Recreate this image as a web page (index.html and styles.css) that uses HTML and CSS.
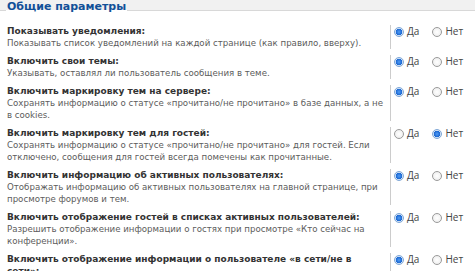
FILE: index.html
```html
<!DOCTYPE html>
<html lang="ru">
<head>
  <meta charset="UTF-8" />
  <meta name="viewport" content="width=device-width, initial-scale=1.0"/>
  <title>Общие параметры</title>
  <link rel="stylesheet" href="styles.css">
</head>
<body>

  <fieldset class="settings">
    <legend>Общие параметры</legend>

    <dl class="row">
      <dt>
        <label class="name">Показывать уведомления:</label>
        <span class="explain">Показывать список уведомлений на каждой странице (как правило, вверху).</span>
      </dt>
      <dd>
        <label class="opt"><input type="radio" name="notify" checked /> Да</label>
        <label class="opt"><input type="radio" name="notify" /> Нет</label>
      </dd>
    </dl>

    <dl class="row">
      <dt>
        <label class="name">Включить свои темы:</label>
        <span class="explain">Указывать, оставлял ли пользователь сообщения в теме.</span>
      </dt>
      <dd>
        <label class="opt"><input type="radio" name="dotted" checked /> Да</label>
        <label class="opt"><input type="radio" name="dotted" /> Нет</label>
      </dd>
    </dl>

    <dl class="row">
      <dt>
        <label class="name">Включить маркировку тем на сервере:</label>
        <span class="explain">Сохранять информацию о статусе «прочитано/не прочитано» в базе данных, а не в cookies.</span>
      </dt>
      <dd>
        <label class="opt"><input type="radio" name="db_track" checked /> Да</label>
        <label class="opt"><input type="radio" name="db_track" /> Нет</label>
      </dd>
    </dl>

    <dl class="row">
      <dt>
        <label class="name">Включить маркировку тем для гостей:</label>
        <span class="explain">Сохранять информацию о статусе «прочитано/не прочитано» для гостей. Если отключено, сообщения для гостей всегда помечены как прочитанные.</span>
      </dt>
      <dd>
        <label class="opt"><input type="radio" name="guest_track" /> Да</label>
        <label class="opt"><input type="radio" name="guest_track" checked /> Нет</label>
      </dd>
    </dl>

    <dl class="row">
      <dt>
        <label class="name">Включить информацию об активных пользователях:</label>
        <span class="explain">Отображать информацию об активных пользователях на главной странице, при просмотре форумов и тем.</span>
      </dt>
      <dd>
        <label class="opt"><input type="radio" name="online" checked /> Да</label>
        <label class="opt"><input type="radio" name="online" /> Нет</label>
      </dd>
    </dl>

    <dl class="row">
      <dt>
        <label class="name">Включить отображение гостей в списках активных пользователей:</label>
        <span class="explain">Разрешить отображение информации о гостях при просмотре «Кто сейчас на конференции».</span>
      </dt>
      <dd>
        <label class="opt"><input type="radio" name="online_guests" checked /> Да</label>
        <label class="opt"><input type="radio" name="online_guests" /> Нет</label>
      </dd>
    </dl>

    <dl class="row">
      <dt>
        <label class="name">Включить отображение информации о пользователе «в сети/не в сети»:</label>
        <span class="explain">Показывать в профилях и темах, находится ли пользователь в сети.</span>
      </dt>
      <dd>
        <label class="opt"><input type="radio" name="online_track" checked /> Да</label>
        <label class="opt"><input type="radio" name="online_track" /> Нет</label>
      </dd>
    </dl>
  </fieldset>

</body>
</html>
```

FILE: styles.css
```css
body {
  margin: 0;
  background: #f1f1f1;
  font-family: "DejaVu Sans", Verdana, sans-serif;
  color: #333;
}
.settings {
  margin: 0;
  padding: 2px 0 0 0;
  border: none;
  border-top: 1px solid #d8d8d8;
  background: #fff;
}
.settings legend {
  margin-left: 6px;
  padding: 0 1px 6px 1px;
  font-size: 11px;
  line-height: 14px;
  font-weight: bold;
  color: #115098;
}
.row {
  display: flex;
  margin: 0;
  padding: 3px 0;
}
.row dt {
  box-sizing: border-box;
  flex: 0 0 391px;
  padding-left: 7px;
  border-right: 1px solid #ccc;
  line-height: 12px;
}
.row dd {
  flex: 1;
  margin: 0;
  padding-left: 3px;
  display: flex;
  align-items: flex-start;
  gap: 13px;
}
.name {
  display: block;
  padding-right: 8px;
  font-size: 9px;
  font-weight: bold;
  color: #333;
}
.explain {
  display: block;
  font-size: 8.65px;
  color: #5c5c5c;
}
.opt {
  display: flex;
  align-items: center;
  gap: 3px;
  font-family: "Open Sans", sans-serif;
  font-size: 10px;
  line-height: 12px;
  color: #444;
}
.opt input {
  -webkit-appearance: none;
  appearance: none;
  width: 10px;
  height: 10px;
  margin: 1px 0 0 0;
  border: 1px solid #9a9a9a;
  border-radius: 50%;
  background: radial-gradient(circle, #fff 0%, #eaeaea 100%);
}
.opt input:checked {
  border-color: #7fa7d6;
  background: radial-gradient(circle, #4f9af2 0%, #1966d2 55%, #cfe0f5 62%, #eef4fb 100%);
}
```
